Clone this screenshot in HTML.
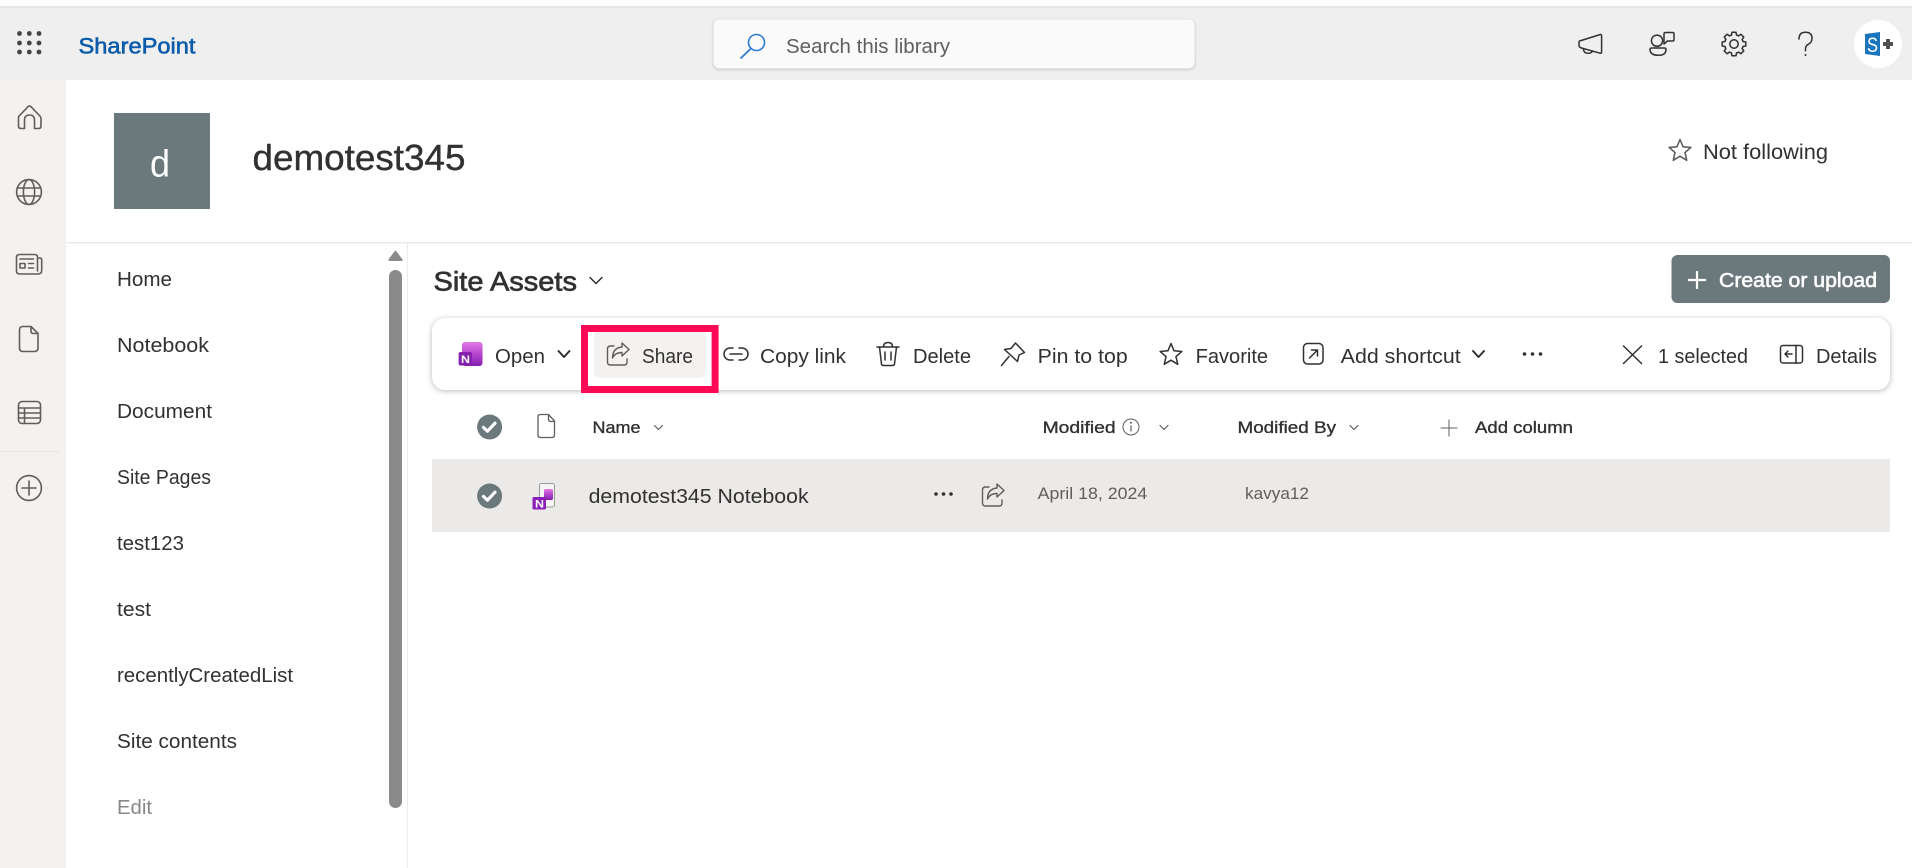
<!DOCTYPE html>
<html lang="en">
<head>
<meta charset="utf-8">
<title>demotest345 - Site Assets</title>
<style>
html,body{margin:0;padding:0;background:#fff;width:1912px;height:868px;overflow:hidden}
svg{display:block}
text{font-family:"Liberation Sans",sans-serif;fill:#323130;white-space:pre}
.i{fill:none;stroke:#605e5c;stroke-width:1.6;stroke-linecap:round;stroke-linejoin:round}
.d{fill:none;stroke:#323130;stroke-width:1.5;stroke-linecap:round;stroke-linejoin:round}
.t{font-size:20px}
.h{font-size:17px;stroke:#323130;stroke-width:.35}
.g{font-size:17px;fill:#605e5c}
</style>
</head>
<body>
<svg width="1912" height="868" viewBox="0 0 1912 868" xmlns="http://www.w3.org/2000/svg">
<defs>
<linearGradient id="on" x1="0" y1="0" x2="0" y2="1"><stop offset="0" stop-color="#e27ae6"/><stop offset=".5" stop-color="#b545cf"/><stop offset="1" stop-color="#8420ae"/></linearGradient>
</defs>
<!-- Top bar -->
<rect x="0" y="6" width="1912" height="2" fill="#e6e6e6"/>
<rect x="0" y="8" width="1912" height="72" fill="#efefef"/>
<g fill="#444">
<circle cx="19.5" cy="33.5" r="2.4"/><circle cx="29.3" cy="33.5" r="2.4"/><circle cx="39" cy="33.5" r="2.4"/>
<circle cx="19.5" cy="43" r="2.4"/><circle cx="29.3" cy="43" r="2.4"/><circle cx="39" cy="43" r="2.4"/>
<circle cx="19.5" cy="52" r="2.4"/><circle cx="29.3" cy="52" r="2.4"/><circle cx="39" cy="52" r="2.4"/>
</g>
<text x="78.5" y="53.5" font-size="22" textLength="117" lengthAdjust="spacingAndGlyphs" style="fill:#0b5cab;stroke:#0b5cab;stroke-width:.6">SharePoint</text>
<!-- Search -->
<rect x="713.5" y="19.5" width="481" height="49" rx="6" fill="#fafafa" style="filter:drop-shadow(0 1px 1.5px rgba(0,0,0,.2))"/>
<circle cx="756.5" cy="42.5" r="8" fill="none" stroke="#2b7cd3" stroke-width="1.6"/>
<path d="M751 48.5 L741 58" fill="none" stroke="#2b7cd3" stroke-width="1.8" stroke-linecap="round"/>
<text x="786" y="52.8" class="t" textLength="164" lengthAdjust="spacingAndGlyphs" style="fill:#605e5c">Search this library</text>
<!-- Right icons -->
<path class="d" d="M1579.5 41 L1600 34.6 q1.6-.4 1.6 1.4 V52 q0 1.6-1.6 1.2 L1581.5 48 q-2.5-.7-2.5-2.8 V42 q0-.7 .5-1z"/>
<path class="d" d="M1583.5 49.5 q.5 3.8 4.5 3.8 q3.5 0 4.5-2.3"/>
<circle class="d" cx="1657" cy="40.7" r="5.6"/>
<path class="d" d="M1651.5 48 h13 q1.5 0 1.5 1.5 q0 5.8-7.5 5.8 q-8.5 0-8.5-5.8 q0-1.5 1.5-1.5z"/>
<path class="d" d="M1664 34 q0-1.5 1.5-1.5 h7 q1.5 0 1.5 1.5 v5.5 q0 1.5-1.5 1.5 h-5 l-3.5 3 z"/>
<g class="d" transform="translate(1734 44)">
<circle r="4.2"/>
<path d="M-2.5-9 L-2-11.8 H2 L2.5-9 A9.34 9.34 0 0 1 4.6-8.13"/>
<path transform="rotate(45)" d="M-2.5-9 L-2-11.8 H2 L2.5-9 A9.34 9.34 0 0 1 4.6-8.13"/>
<path transform="rotate(90)" d="M-2.5-9 L-2-11.8 H2 L2.5-9 A9.34 9.34 0 0 1 4.6-8.13"/>
<path transform="rotate(135)" d="M-2.5-9 L-2-11.8 H2 L2.5-9 A9.34 9.34 0 0 1 4.6-8.13"/>
<path transform="rotate(180)" d="M-2.5-9 L-2-11.8 H2 L2.5-9 A9.34 9.34 0 0 1 4.6-8.13"/>
<path transform="rotate(225)" d="M-2.5-9 L-2-11.8 H2 L2.5-9 A9.34 9.34 0 0 1 4.6-8.13"/>
<path transform="rotate(270)" d="M-2.5-9 L-2-11.8 H2 L2.5-9 A9.34 9.34 0 0 1 4.6-8.13"/>
<path transform="rotate(315)" d="M-2.5-9 L-2-11.8 H2 L2.5-9 A9.34 9.34 0 0 1 4.6-8.13"/>
</g>
<path class="d" d="M1799 39 q0-6.8 6.5-6.8 q6.5 0 6.5 6 q0 4-3.5 6 q-3 1.5-3 5 v1.5"/>
<circle cx="1805.5" cy="55" r="1" fill="#323130"/>
<circle cx="1878" cy="44" r="24" fill="#fff"/>
<path d="M1865 34 L1880 32 V56 L1865 54z" fill="#1b75bc"/>
<text x="1867" y="52" font-size="21" textLength="11" lengthAdjust="spacingAndGlyphs" style="fill:#fff">S</text>
<path d="M1883 44 h10 M1888 39 v10" stroke="#505050" stroke-width="4" fill="none"/>
<!-- Left rail -->
<rect x="0" y="80" width="66" height="788" fill="#f3f2f1"/>
<path class="i" d="M18.7 116.5 L28 106.7 q1.5-1.4 3 0 L40.3 116.5 q.7 .8 .7 2 V126 q0 2.5-2.5 2.5 H34.5 V120 q0-5-5-5 t-5 5 V128.5 H21 q-2.5 0-2.5-2.5 V118.5 q0-1.2 .2-2 z"/>
<circle class="i" cx="29" cy="192" r="12.4"/>
<ellipse class="i" cx="29" cy="192" rx="5.6" ry="12.4"/>
<path class="i" d="M17.5 188 H40.5 M17.5 196 H40.5"/>
<path class="i" d="M37.5 271 V257.5 q0-3-3-3 H19.5 q-3 0-3 3 V271 q0 3 3 3 H38 q3.7 0 3.7-3.5 V260 q0-2-2-2 H37.5"/>
<path class="i" d="M20 259 H33.5 M20 263.5 h5 v4.5 h-5z M28.5 263.5 H33.5 M28.5 268 H33.5"/>
<path class="i" d="M23 326.5 H31 L38 333.5 V348 q0 3.5-3.5 3.5 H23 q-3.5 0-3.5-3.5 V330 q0-3.5 3.5-3.5 z M31 327 v4 q0 2.5 2.5 2.5 h4"/>
<rect class="i" x="18.5" y="401.5" width="22" height="22" rx="3.5"/>
<path class="i" d="M18.5 408 H40.5 M18.5 413 H40.5 M18.5 418 H40.5 M24.5 408 V423"/>
<rect x="0" y="451" width="59" height="1" fill="#e6e5e3"/>
<circle class="i" cx="29" cy="488" r="12.4"/>
<path class="i" d="M29 481 V495 M22 488 H36"/>
<!-- Site header -->
<rect x="114" y="113" width="96" height="96" fill="#6b787c"/>
<text x="150" y="176.5" font-size="38" textLength="20" lengthAdjust="spacingAndGlyphs" style="fill:#fff">d</text>
<text x="252.5" y="170" font-size="36" textLength="213" lengthAdjust="spacingAndGlyphs" style="stroke:#323130;stroke-width:.4">demotest345</text>
<path d="M0-11.5 L3.06-4.2 10.9-3.55 4.95 1.6 6.76 9.3 0 5.2 -6.76 9.3 -4.95 1.6 -10.9-3.55 -3.06-4.2z" class="i" transform="translate(1680 151)"/>
<text x="1703" y="159" font-size="21" textLength="125" lengthAdjust="spacingAndGlyphs">Not following</text>
<rect x="66" y="242" width="1846" height="1.5" fill="#edebe9"/>
<!-- Nav -->
<rect x="407" y="243" width="1" height="625" fill="#edebe9"/>
<text x="117" y="286" class="t" textLength="55" lengthAdjust="spacingAndGlyphs">Home</text>
<text x="117" y="352" class="t" textLength="92" lengthAdjust="spacingAndGlyphs">Notebook</text>
<text x="117" y="418" class="t" textLength="95" lengthAdjust="spacingAndGlyphs">Document</text>
<text x="117" y="484" class="t" textLength="94" lengthAdjust="spacingAndGlyphs">Site Pages</text>
<text x="117" y="550" class="t" textLength="67" lengthAdjust="spacingAndGlyphs">test123</text>
<text x="117" y="616" class="t" textLength="34" lengthAdjust="spacingAndGlyphs">test</text>
<text x="117" y="682" class="t" textLength="176" lengthAdjust="spacingAndGlyphs">recentlyCreatedList</text>
<text x="117" y="748" class="t" textLength="120" lengthAdjust="spacingAndGlyphs">Site contents</text>
<text x="117" y="814" class="t" textLength="35" lengthAdjust="spacingAndGlyphs" style="fill:#8a8886">Edit</text>
<path d="M395.5 251 L402 259.5 Q402.5 260.5 401 260.5 H390 Q388.5 260.5 389 259.5z" fill="#8a8a8a" stroke="#8a8a8a" stroke-linejoin="round"/>
<rect x="389" y="270" width="13" height="538" rx="6.5" fill="#8a8a8a"/>
<!-- Title + create -->
<text x="433.5" y="290.7" font-size="27" textLength="143.5" lengthAdjust="spacingAndGlyphs" style="stroke:#323130;stroke-width:.7">Site Assets</text>
<path class="d" d="M590 277.5 L596 283.5 L602 277.5"/>
<rect x="1671.5" y="255" width="218.5" height="48" rx="6" fill="#6b787c"/>
<path d="M1697 271 V289 M1688 280 H1706" stroke="#fff" stroke-width="2.2" fill="none"/>
<text x="1719" y="287" class="t" textLength="158" lengthAdjust="spacingAndGlyphs" style="fill:#fff;stroke:#fff;stroke-width:.6">Create or upload</text>
<!-- Toolbar -->
<rect x="432" y="318" width="1458" height="72" rx="13" fill="#fff" style="filter:drop-shadow(0 1px 3px rgba(0,0,0,.28))"/>
<!-- OneNote open icon -->
<rect x="462" y="342" width="20.5" height="24" rx="3" fill="url(#on)"/>
<rect x="458.6" y="352" width="13.5" height="13.5" rx="2" fill="#8420ae"/>
<text x="461" y="363" font-size="11" font-weight="700" textLength="9" lengthAdjust="spacingAndGlyphs" style="fill:#fff">N</text>
<text x="495" y="363" class="t" textLength="50" lengthAdjust="spacingAndGlyphs">Open</text>
<path d="M558.5 351 L564 357 L569.5 351" fill="none" stroke="#323130" stroke-width="2" stroke-linecap="round" stroke-linejoin="round"/>
<!-- Share hover + red box -->
<rect x="594" y="330" width="112" height="47.7" rx="6" fill="#f3f2f1"/>
<rect x="584.5" y="328.5" width="130.6" height="61" fill="none" stroke="#ff0a54" stroke-width="7"/>
<g class="i" style="stroke-width:1.4">
<path d="M614 346 h-3.5 q-3 0-3 3 v13 q0 3 3 3 h13.5 q3 0 3-3 v-3"/>
<path d="M622 343 l7 6.5 l-7 6.5 v-3.5 q-7 0-9.5 5.5 q0-10 9.5-11 z"/>
</g>
<text x="642" y="363" class="t" textLength="51" lengthAdjust="spacingAndGlyphs">Share</text>
<path class="d" d="M733 348 h-3 a6 6 0 0 0 0 12 h3 M739 348 h3 a6 6 0 0 1 0 12 h-3 M730 354 H742"/>
<text x="760" y="363" class="t" textLength="86" lengthAdjust="spacingAndGlyphs">Copy link</text>
<path class="d" d="M877 347 H899 M883.5 347 q0-4.5 4.5-4.5 q4.5 0 4.5 4.5 M879.5 347 l2 17 q.2 1.5 2 1.5 h9 q1.8 0 2-1.5 l2-17 M885 352 V360 M891 352 V360"/>
<text x="913" y="363" class="t" textLength="58" lengthAdjust="spacingAndGlyphs">Delete</text>
<path class="d" d="M1015.5 343 L1024.5 352.5 L1019 355 L1017.5 361.5 L1004.5 349.5 L1011 348.5 Z M1009 356.5 L1001.5 365.5"/>
<text x="1037.7" y="363" class="t" textLength="90" lengthAdjust="spacingAndGlyphs">Pin to top</text>
<path class="d" d="M0-11.5 L3.06-4.2 10.9-3.55 4.95 1.6 6.76 9.3 0 5.2 -6.76 9.3 -4.95 1.6 -10.9-3.55 -3.06-4.2z" transform="translate(1171 355)"/>
<text x="1195.6" y="363" class="t" textLength="72.5" lengthAdjust="spacingAndGlyphs">Favorite</text>
<rect class="d" x="1303.5" y="343.5" width="19.5" height="20.5" rx="4"/>
<path class="d" d="M1309.5 358 L1317 350.5 M1311.5 350 H1317.5 V356"/>
<text x="1340.7" y="363" class="t" textLength="120" lengthAdjust="spacingAndGlyphs">Add shortcut</text>
<path d="M1473 351 L1478.5 357 L1484 351" fill="none" stroke="#323130" stroke-width="2" stroke-linecap="round" stroke-linejoin="round"/>
<g fill="#323130"><circle cx="1524.5" cy="354" r="1.8"/><circle cx="1532.5" cy="354" r="1.8"/><circle cx="1540.5" cy="354" r="1.8"/></g>
<path class="d" d="M1623.5 346 L1641.5 363.5 M1641.5 346 L1623.5 363.5"/>
<text x="1658" y="363" class="t" textLength="90" lengthAdjust="spacingAndGlyphs">1 selected</text>
<rect class="d" x="1780.5" y="345.5" width="22" height="17.5" rx="2.5"/>
<path class="d" d="M1796 345.5 V363 M1792 354 H1785 M1788 351 L1785 354 L1788 357"/>
<text x="1816" y="363" class="t" textLength="61" lengthAdjust="spacingAndGlyphs">Details</text>
<!-- List header -->
<circle cx="489.6" cy="427" r="12.5" fill="#6b787c"/>
<path d="M483.5 427.5 l4 3.7 l7.5-8" fill="none" stroke="#fff" stroke-width="3.2" stroke-linecap="round" stroke-linejoin="round"/>
<path class="i" d="M540.5 414.5 H548.5 L554.5 421 V435 q0 2.5-2.5 2.5 H540.5 q-2.5 0-2.5-2.5 V417 q0-2.5 2.5-2.5z M548.5 415 v4 q0 2.5 2.5 2.5 h3.5" style="stroke-width:1.3"/>
<text x="592.5" y="433" class="h" textLength="48" lengthAdjust="spacingAndGlyphs">Name</text>
<path class="i" d="M654.5 425.5 L658.5 429.5 L662.5 425.5" style="stroke-width:1.2"/>
<text x="1042.6" y="433" class="h" textLength="73" lengthAdjust="spacingAndGlyphs">Modified</text>
<circle cx="1131" cy="427" r="8" fill="none" stroke="#605e5c" stroke-width="1"/>
<path d="M1131 425.5 V431.5" stroke="#605e5c" stroke-width="1.2"/>
<circle cx="1131" cy="422.7" r="1" fill="#605e5c"/>
<path class="i" d="M1160 425.5 L1164 429.5 L1168 425.5" style="stroke-width:1.2"/>
<text x="1237.5" y="433" class="h" textLength="98.5" lengthAdjust="spacingAndGlyphs">Modified By</text>
<path class="i" d="M1350 425.5 L1354 429.5 L1358 425.5" style="stroke-width:1.2"/>
<path class="i" d="M1449 420 V436 M1441 428 H1457" style="stroke-width:1"/>
<text x="1475" y="433" class="h" textLength="98" lengthAdjust="spacingAndGlyphs">Add column</text>
<!-- Selected row -->
<rect x="432" y="459" width="1458" height="73" fill="#ebeae9"/>
<circle cx="489.6" cy="496" r="12.5" fill="#6b787c"/>
<path d="M483.5 496.5 l4 3.7 l7.5-8" fill="none" stroke="#fff" stroke-width="3.2" stroke-linecap="round" stroke-linejoin="round"/>
<rect x="539.5" y="483.5" width="15" height="23.5" rx="2" fill="#f5f5f5" stroke="#9a9a9a"/>
<rect x="544" y="489" width="9" height="11" rx="1.5" fill="url(#on)"/>
<rect x="532.5" y="497" width="13.5" height="12.5" rx="1.5" fill="#8c1fb8"/>
<text x="535" y="507.5" font-size="11" font-weight="700" textLength="9" lengthAdjust="spacingAndGlyphs" style="fill:#fff">N</text>
<text x="588.6" y="503" font-size="20" textLength="220" lengthAdjust="spacingAndGlyphs">demotest345 Notebook</text>
<g fill="#323130"><circle cx="936" cy="494" r="1.8"/><circle cx="943.5" cy="494" r="1.8"/><circle cx="951" cy="494" r="1.8"/></g>
<g class="i" style="stroke-width:1.4" transform="translate(375 141)">
<path d="M614 346 h-3.5 q-3 0-3 3 v13 q0 3 3 3 h13.5 q3 0 3-3 v-3"/>
<path d="M622 343 l7 6.5 l-7 6.5 v-3.5 q-7 0-9.5 5.5 q0-10 9.5-11 z"/>
</g>
<text x="1037.7" y="499" class="g" textLength="109.5" lengthAdjust="spacingAndGlyphs">April 18, 2024</text>
<text x="1245" y="499" class="g" textLength="64" lengthAdjust="spacingAndGlyphs">kavya12</text>
</svg>
</body>
</html>
